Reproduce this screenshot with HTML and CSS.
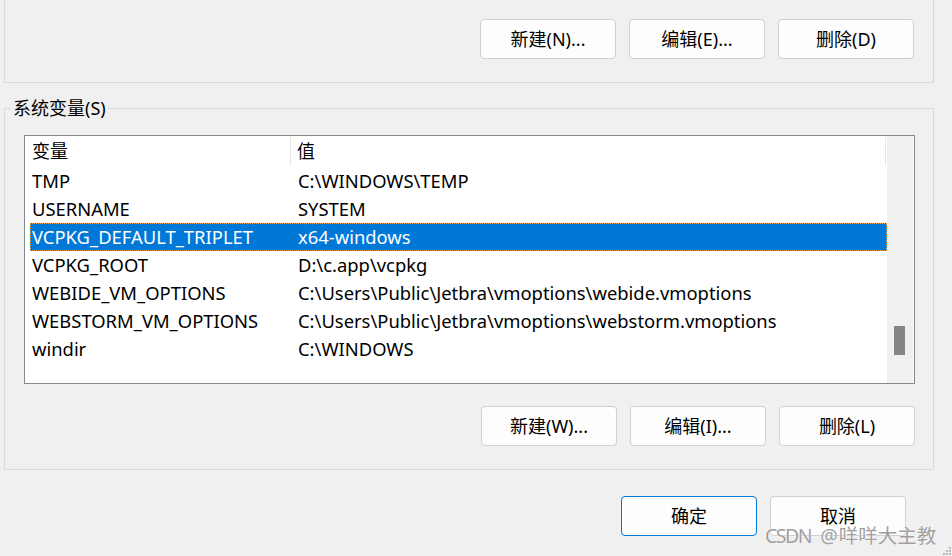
FILE: index.html
```html
<!DOCTYPE html>
<html lang="zh-CN">
<head>
<meta charset="utf-8">
<title>环境变量</title>
<link rel="stylesheet" href="styles.css">
</head>
<body>
<div class="dialog">
  <div class="group group-user">
    <div class="btn-row">
      <button class="btn">新建(N)...</button>
      <button class="btn">编辑(E)...</button>
      <button class="btn">删除(D)</button>
    </div>
  </div>

  <fieldset class="group group-sys">
    <legend class="group-title">系统变量(S)</legend>
    <div class="group-body">
      <div class="listbox">
        <div class="list">
          <div class="list-head">
            <div class="hcol hc1">变量</div>
            <div class="hcol hc2">值</div>
          </div>
          <div class="row"><span class="c1">TMP</span><span class="c2">C:\WINDOWS\TEMP</span></div>
          <div class="row"><span class="c1">USERNAME</span><span class="c2">SYSTEM</span></div>
          <div class="row selected"><span class="c1">VCPKG_DEFAULT_TRIPLET</span><span class="c2">x64-windows</span></div>
          <div class="row"><span class="c1">VCPKG_ROOT</span><span class="c2">D:\c.app\vcpkg</span></div>
          <div class="row"><span class="c1">WEBIDE_VM_OPTIONS</span><span class="c2">C:\Users\Public\Jetbra\vmoptions\webide.vmoptions</span></div>
          <div class="row"><span class="c1">WEBSTORM_VM_OPTIONS</span><span class="c2">C:\Users\Public\Jetbra\vmoptions\webstorm.vmoptions</span></div>
          <div class="row"><span class="c1">windir</span><span class="c2">C:\WINDOWS</span></div>
        </div>
        <div class="scrollbar"><div class="thumb"></div></div>
      </div>
      <div class="btn-row btn-row-sys">
        <button class="btn">新建(W)...</button>
        <button class="btn">编辑(I)...</button>
        <button class="btn">删除(L)</button>
      </div>
    </div>
  </fieldset>

  <div class="footer">
    <button class="btn primary">确定</button>
    <button class="btn">取消</button>
  </div>

  <div class="watermark"><span class="wm-latin">CSDN</span> <span class="wm-at">@</span>咩咩大主教</div>
  <svg class="grip" width="10" height="10" viewBox="0 0 10 10">
    <rect x="7" y="1" width="2" height="2" fill="#b8b8b8"/>
    <rect x="4" y="4" width="2" height="2" fill="#b8b8b8"/>
    <rect x="7" y="4" width="2" height="2" fill="#b8b8b8"/>
    <rect x="1" y="7" width="2" height="2" fill="#b8b8b8"/>
    <rect x="4" y="7" width="2" height="2" fill="#b8b8b8"/>
    <rect x="7" y="7" width="2" height="2" fill="#b8b8b8"/>
  </svg>
</div>
</body>
</html>
```

FILE: styles.css
```css
html, body {
  margin: 0;
  padding: 0;
}

body {
  background: #f0f0f0;
  font-family: "Noto Sans", "Noto Sans CJK SC", sans-serif;
  font-size: 18px;
  color: #000;
  width: 952px;
  height: 556px;
  overflow: hidden;
}

.dialog {
  position: relative;
  width: 952px;
  height: 556px;
}

.group {
  box-sizing: border-box;
  width: 930px;
  margin: 0 0 0 4px;
  border: 1px solid #dadada;
}

.group-user {
  border-top: none;
  height: 83px;
  padding: 19px 19px 0 0;
}

.btn-row {
  display: flex;
  justify-content: flex-end;
  gap: 13px;
}

.btn {
  box-sizing: border-box;
  width: 136px;
  height: 40px;
  margin: 0;
  padding: 0;
  background: #fdfdfd;
  border: 1px solid #d0d0d0;
  border-radius: 4px;
  font-family: "Noto Sans", "Noto Sans CJK SC", sans-serif;
  font-size: 18px;
  color: #000;
  line-height: 38px;
  text-align: center;
}

.btn.primary {
  border-color: #0078d4;
}

.group-sys {
  margin-top: 15px;
  padding: 0;
  min-width: 0;
}

.group-title {
  margin-left: 6px;
  padding: 0 2px;
  line-height: 21px;
  height: 21px;
}

.group-body {
  padding: 16px 18px 23px 19px;
}

.listbox {
  box-sizing: border-box;
  width: 891px;
  height: 249px;
  border: 1px solid #828790;
  background: #fff;
  display: flex;
}

.list {
  width: 862px;
  overflow: hidden;
}

.list-head {
  display: flex;
  height: 31px;
  padding-top: 1px;
  box-sizing: border-box;
}

.hcol {
  box-sizing: border-box;
  height: 29px;
  line-height: 29px;
  border-right: 1px solid #e5e5e5;
  white-space: nowrap;
}

.hc1 {
  width: 266px;
  padding-left: 7px;
}

.hc2 {
  width: 595px;
  padding-left: 6px;
}

.row {
  display: flex;
  margin-left: 5px;
  width: 857px;
  height: 28px;
  line-height: 28px;
  font-size: 18.4px;
  white-space: nowrap;
}

.row .c1 {
  box-sizing: border-box;
  width: 268px;
  padding-left: 2px;
}

.row .c2 {
  flex: 1;
}

.row.selected {
  background: #0078d7;
  color: #fff;
  outline: 1px dotted #f0a040;
  outline-offset: -1px;
}

.scrollbar {
  width: 26px;
  background: #f0f0f0;
  padding: 190px 0 0 7px;
  box-sizing: border-box;
}

.thumb {
  width: 11px;
  height: 29px;
  background: #858585;
}

.btn-row-sys {
  margin-top: 22px;
}

.footer {
  display: flex;
  justify-content: flex-end;
  gap: 13px;
  margin-top: 26px;
  padding-right: 46px;
}

.watermark {
  position: absolute;
  left: 765px;
  top: 525px;
  font-family: "Noto Sans", "Noto Sans CJK SC", sans-serif;
  font-size: 19.5px;
  line-height: 22px;
  color: #a0a0a0;
  text-shadow: 0 0 1px #fff, 0 0 1px #fff;
  white-space: nowrap;
}

.wm-latin {
  letter-spacing: -1.5px;
}

.wm-at {
  margin-left: 4px;
  margin-right: 1px;
}

.grip {
  position: absolute;
  right: 0;
  bottom: 0;
}
```
